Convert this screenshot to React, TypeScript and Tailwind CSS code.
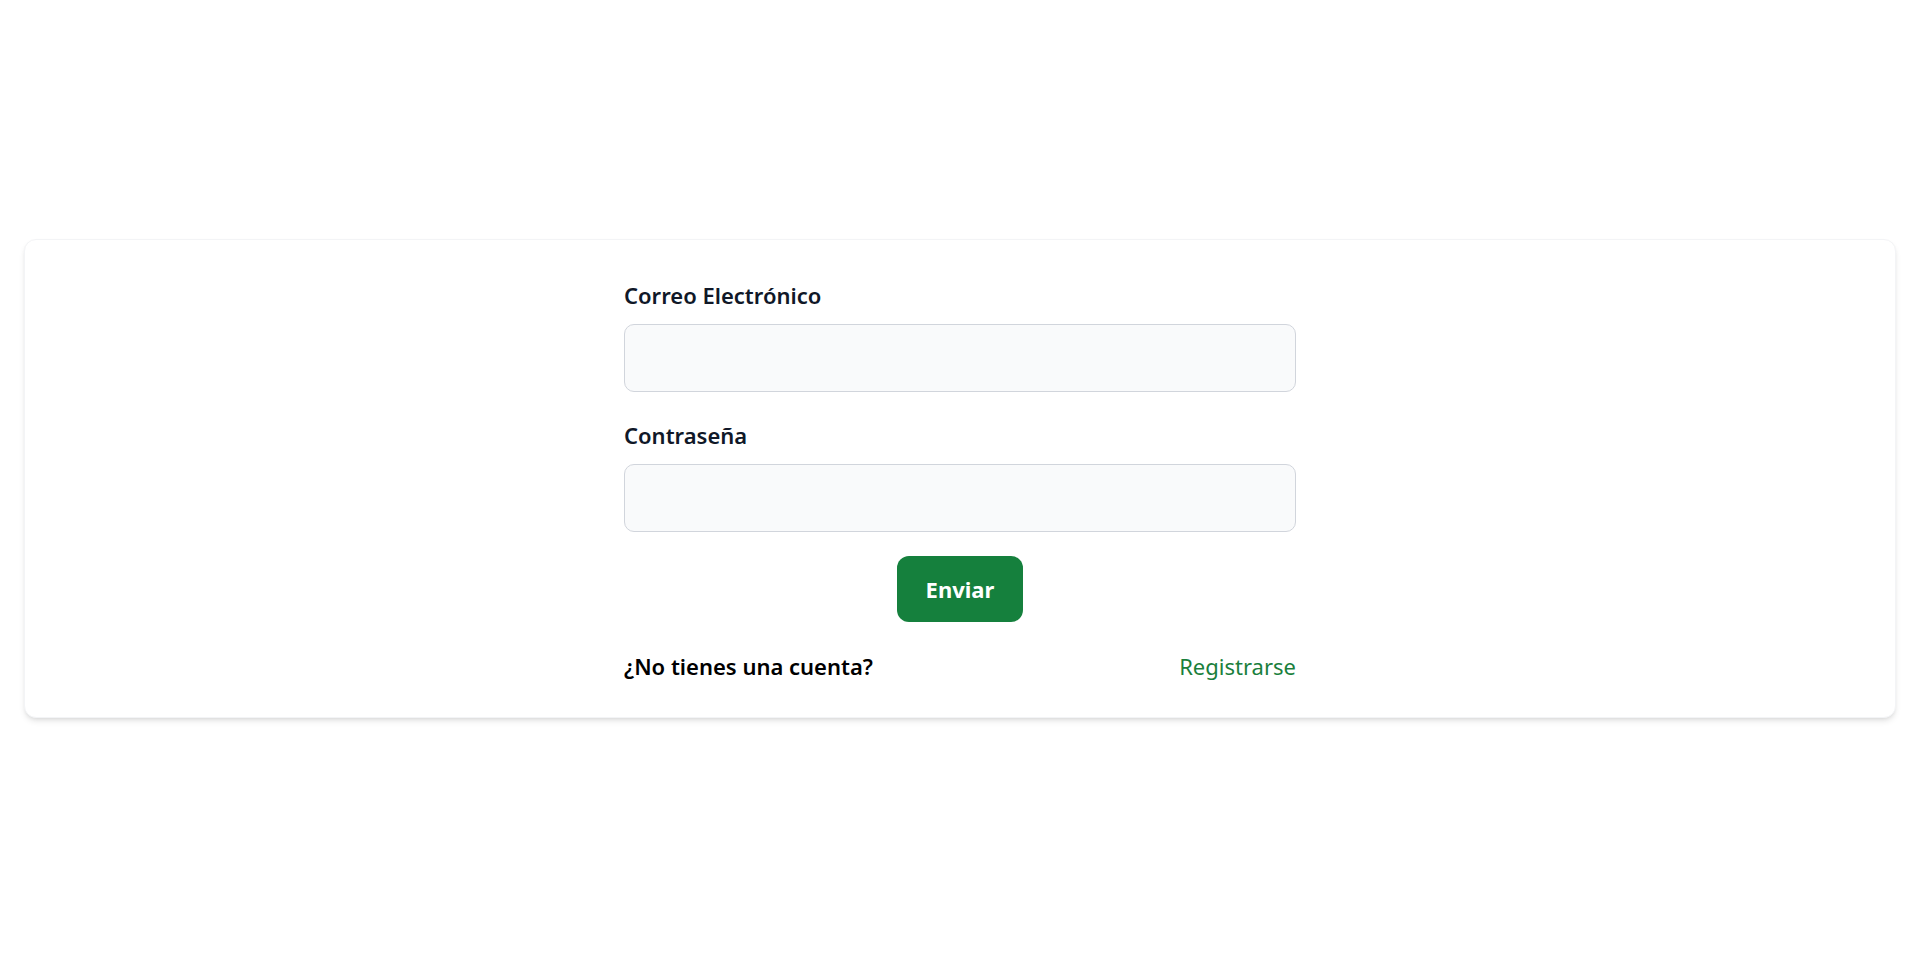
export default function App() {
  return (
    <div className="min-h-screen bg-white flex items-center px-6 font-['Noto_Sans',sans-serif]">
      <div className="w-full rounded-xl border border-gray-100 bg-white shadow-md">
        <form className="max-w-2xl mx-auto pt-10 pb-9" onSubmit={(e) => e.preventDefault()}>
          <label className="block text-[22px] leading-[30px] font-semibold text-gray-900 mb-[14px]">
            Correo Electrónico
          </label>
          <input
            type="email"
            className="block w-full h-[68px] rounded-[10px] border border-gray-300 bg-gray-50 px-4 text-xl"
          />

          <label className="block text-[22px] leading-[30px] font-semibold text-gray-900 mt-7 mb-[14px]">
            Contraseña
          </label>
          <input
            type="password"
            className="block w-full h-[68px] rounded-[10px] border border-gray-300 bg-gray-50 px-4 text-xl"
          />

          <div className="flex justify-center mt-6">
            <button
              type="submit"
              className="w-[126px] h-[66px] rounded-xl bg-[#15803d] text-white text-[22px] font-bold"
            >
              Enviar
            </button>
          </div>

          <div className="flex justify-between items-center mt-[29px] text-[22px] leading-[30px]">
            <span className="font-semibold text-black">¿No tienes una cuenta?</span>
            <a href="#" className="text-[#1a7f3c]">Registrarse</a>
          </div>
        </form>
      </div>
    </div>
  );
}
